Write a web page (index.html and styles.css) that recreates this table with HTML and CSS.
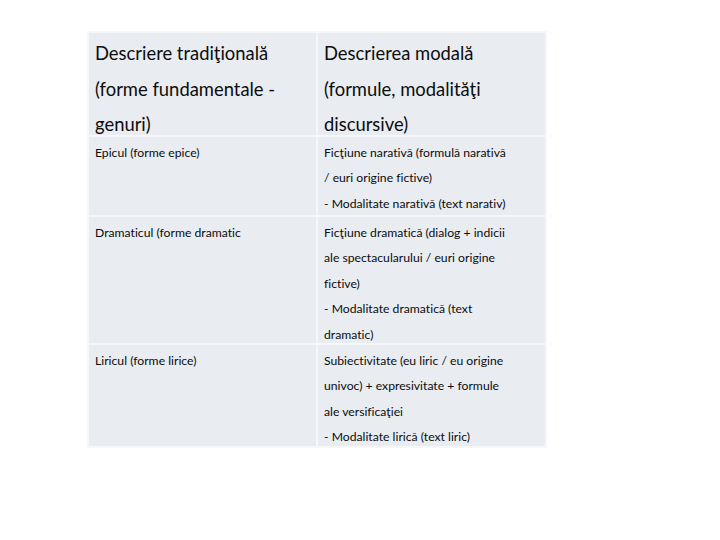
FILE: index.html
```html
<!DOCTYPE html>
<html lang="ro">
<head>
<meta charset="utf-8">
<link rel="stylesheet" href="styles.css">
</head>
<body>
<table class="grid">
  <tr class="head">
    <td class="c1"><div class="box">Descriere tradiţională<br>(forme fundamentale -<br>genuri)</div></td>
    <td class="c2"><div class="box">Descrierea modală<br>(formule, modalităţi<br>discursive)</div></td>
  </tr>
  <tr class="r1">
    <td class="c1"><div class="box">Epicul (forme epice)</div></td>
    <td class="c2"><div class="box">Ficţiune narativă (formulă narativă<br>/ euri origine fictive)<br>- Modalitate narativă (text narativ)</div></td>
  </tr>
  <tr class="r2">
    <td class="c1"><div class="box">Dramaticul (forme dramatic</div></td>
    <td class="c2"><div class="box">Ficţiune dramatică (dialog + indicii<br>ale spectacularului / euri origine<br>fictive)<br>- Modalitate dramatică (text<br>dramatic)</div></td>
  </tr>
  <tr class="r3">
    <td class="c1"><div class="box">Liricul (forme lirice)</div></td>
    <td class="c2"><div class="box">Subiectivitate (eu liric / eu origine<br>univoc) + expresivitate + formule<br>ale versificaţiei<br>- Modalitate lirică (text liric)</div></td>
  </tr>
</table>
</body>
</html>
```

FILE: styles.css
```css
html, body {
  margin: 0;
  padding: 0;
  background: #ffffff;
}
body {
  padding: 31px 0 0 87px;
  font-family: "Lato", "Open Sans", "Liberation Sans", sans-serif;
  font-variant-ligatures: none;
  color: #0c0c0c;
}
.grid {
  border-collapse: collapse;
  background: #e9edf2;
  width: 460px;
}
.grid td {
  border: 2px solid #f6f7f9;
  vertical-align: top;
  padding: 0 6px;
}
.grid .c1 { width: 215px; }
.box {
  overflow: visible;
}
.head .box {
  font-size: 18.4px;
  line-height: 35.5px;
  height: 99px;
  padding-top: 3px;
}
.r1 .box, .r2 .box, .r3 .box {
  font-size: 12.2px;
  line-height: 25.4px;
  padding-top: 3px;
}
.r1 .box { height: 75px; }
.r2 .box { height: 123px; }
.r3 .box { height: 98px; }
```
